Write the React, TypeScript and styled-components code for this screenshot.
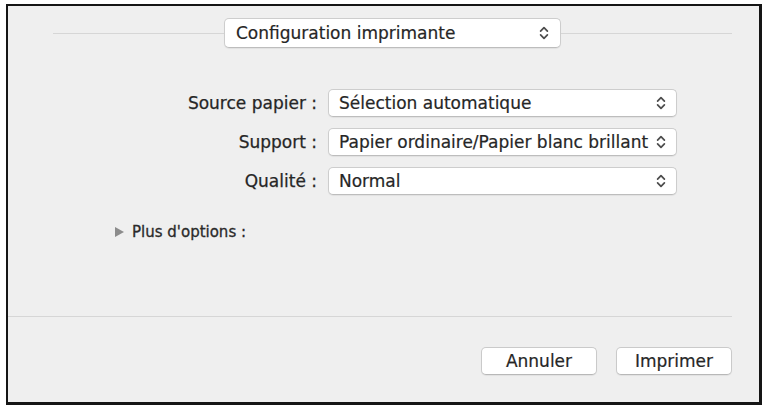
import React from "react";
import styled, { createGlobalStyle } from "styled-components";

const Global = createGlobalStyle`
  html, body { margin: 0; padding: 0; background: #ffffff; }
  body { font-family: "DejaVu Sans", "Liberation Sans", sans-serif; }
  * { box-sizing: border-box; }
`;

const Frame = styled.div`
  margin: 4px 0 0 6px;
  width: 756px;
  height: 401px;
  border: 2px solid #151515;
  border-right-width: 3px;
  border-bottom-width: 3px;
  background: #efefef;
  display: flex;
  flex-direction: column;
  color: #262626;
`;

const Header = styled.div`
  margin-top: 12px;
  height: 30px;
  padding: 0 27px 0 45px;
  display: flex;
  align-items: center;
`;

const Rule = styled.div`
  flex: 1;
  height: 1px;
  background: #d6d6d6;
`;

const Popup = styled.div<{ $w: number; $h: number; $pad: number }>`
  width: ${(p) => p.$w}px;
  height: ${(p) => p.$h}px;
  background: #ffffff;
  border: 1px solid #cdcdcd;
  border-bottom-color: #bdbdbd;
  border-radius: 5px;
  box-shadow: 0 1px 1px rgba(0, 0, 0, 0.06);
  display: flex;
  align-items: center;
  justify-content: space-between;
  padding: 0 ${(p) => p.$pad - 1}px 0 ${(p) => p.$pad - 1}px;
  font-size: 17px;
  white-space: nowrap;
  color: #262626;
  -webkit-text-stroke: 0.2px #262626;
`;

const PopupText = styled.span`
  line-height: 1;
`;

const Form = styled.div`
  margin-top: 41px;
  display: grid;
  grid-template-columns: 309px 349px;
  grid-auto-rows: 28px;
  column-gap: 11px;
  row-gap: 11px;
`;

const Label = styled.div`
  font-size: 17px;
  text-align: right;
  align-self: center;
  white-space: nowrap;
  color: #262626;
  -webkit-text-stroke: 0.25px #262626;
`;

const Disclosure = styled.div`
  margin-top: 28px;
  height: 18px;
  padding-left: 107px;
  display: flex;
  align-items: center;
  gap: 8px;
  font-size: 15px;
  color: #2a2a2a;
  -webkit-text-stroke: 0.3px #2a2a2a;
`;

const Triangle = styled.span`
  width: 0;
  height: 0;
  border-top: 5px solid transparent;
  border-bottom: 5px solid transparent;
  border-left: 9px solid #8c8c8c;
`;

const Spacer = styled.div`
  flex: 1;
`;

const BottomRule = styled.div`
  height: 1px;
  margin-right: 27px;
  background: #d6d6d6;
`;

const Buttons = styled.div`
  margin-top: 30px;
  margin-bottom: 27px;
  padding-right: 27px;
  display: flex;
  justify-content: flex-end;
  gap: 19px;
`;

const Button = styled.button`
  width: 116px;
  height: 28px;
  background: #ffffff;
  border: 1px solid #cacaca;
  border-bottom-color: #b8b8b8;
  border-radius: 5px;
  box-shadow: 0 1px 1px rgba(0, 0, 0, 0.06);
  font-family: "DejaVu Sans", "Liberation Sans", sans-serif;
  font-size: 17px;
  color: #262626;
  -webkit-text-stroke: 0.2px #262626;
  padding: 0;
`;

const Chevrons = () => (
  <svg width="10" height="16" viewBox="0 0 10 16" fill="none">
    <path d="M1.6 6.2 L5 2.6 L8.4 6.2" stroke="#4d4d4d" strokeWidth="1.7" strokeLinecap="round" strokeLinejoin="round" />
    <path d="M1.6 9.8 L5 13.4 L8.4 9.8" stroke="#4d4d4d" strokeWidth="1.7" strokeLinecap="round" strokeLinejoin="round" />
  </svg>
);

const rows: { label: string; value: string }[] = [
  { label: "Source papier :", value: "Sélection automatique" },
  { label: "Support :", value: "Papier ordinaire/Papier blanc brillant" },
  { label: "Qualité :", value: "Normal" },
];

export default function App() {
  return (
    <>
      <Global />
      <Frame>
        <Header>
          <Rule />
          <Popup $w={337} $h={30} $pad={12}>
            <PopupText>Configuration imprimante</PopupText>
            <Chevrons />
          </Popup>
          <Rule />
        </Header>
        <Form>
          {rows.map((r) => (
            <React.Fragment key={r.label}>
              <Label>{r.label}</Label>
              <Popup $w={349} $h={28} $pad={11}>
                <PopupText>{r.value}</PopupText>
                <Chevrons />
              </Popup>
            </React.Fragment>
          ))}
        </Form>
        <Disclosure>
          <Triangle />
          <span>Plus d'options :</span>
        </Disclosure>
        <Spacer />
        <BottomRule />
        <Buttons>
          <Button>Annuler</Button>
          <Button>Imprimer</Button>
        </Buttons>
      </Frame>
    </>
  );
}
